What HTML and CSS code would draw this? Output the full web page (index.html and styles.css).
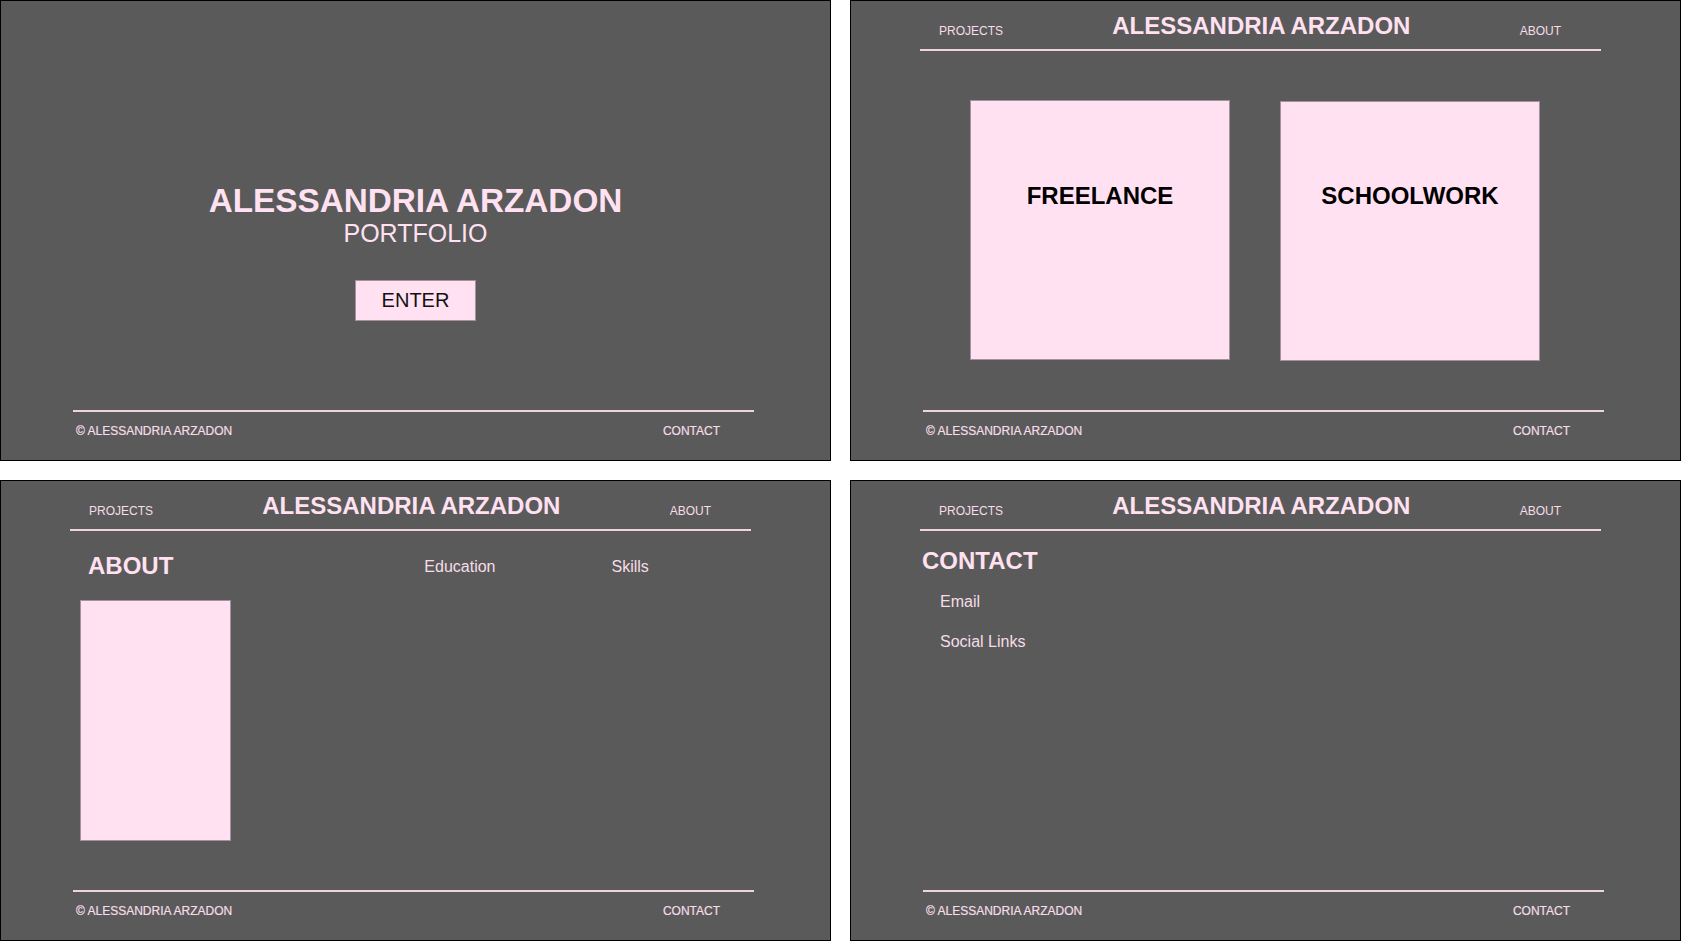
FILE: index.html
```html
<!DOCTYPE html>
<html lang="en">
<head>
<meta charset="utf-8">
<title>Alessandria Arzadon Portfolio</title>
<link rel="stylesheet" href="styles.css">
</head>
<body>
<div class="board">

  <section class="panel">
    <main class="landing">
      <h1 class="landing-title">ALESSANDRIA ARZADON</h1>
      <p class="landing-sub">PORTFOLIO</p>
      <a class="enter-btn" href="#">ENTER</a>
    </main>
    <footer class="foot">
      <span>© ALESSANDRIA ARZADON</span>
      <span>CONTACT</span>
    </footer>
  </section>

  <section class="panel">
    <header class="head">
      <span class="nav">PROJECTS</span>
      <span class="brand">ALESSANDRIA ARZADON</span>
      <span class="nav">ABOUT</span>
    </header>
    <main class="projects">
      <div class="card"><h2 class="card-title">FREELANCE</h2></div>
      <div class="card card-b"><h2 class="card-title">SCHOOLWORK</h2></div>
    </main>
    <footer class="foot">
      <span>© ALESSANDRIA ARZADON</span>
      <span>CONTACT</span>
    </footer>
  </section>

  <section class="panel">
    <header class="head">
      <span class="nav">PROJECTS</span>
      <span class="brand">ALESSANDRIA ARZADON</span>
      <span class="nav">ABOUT</span>
    </header>
    <main class="about">
      <div class="about-row">
        <h2 class="section-title">ABOUT</h2>
        <span class="about-link edu">Education</span>
        <span class="about-link skills">Skills</span>
      </div>
      <div class="photo"></div>
    </main>
    <footer class="foot">
      <span>© ALESSANDRIA ARZADON</span>
      <span>CONTACT</span>
    </footer>
  </section>

  <section class="panel">
    <header class="head">
      <span class="nav">PROJECTS</span>
      <span class="brand">ALESSANDRIA ARZADON</span>
      <span class="nav">ABOUT</span>
    </header>
    <main class="contact">
      <h2 class="section-title">CONTACT</h2>
      <ul class="contact-list">
        <li>Email</li>
        <li>Social Links</li>
      </ul>
    </main>
    <footer class="foot">
      <span>© ALESSANDRIA ARZADON</span>
      <span>CONTACT</span>
    </footer>
  </section>

</div>
</body>
</html>
```
FILE: styles.css
```css
* { box-sizing: border-box; }

html, body {
  margin: 0;
  padding: 0;
  background: #ffffff;
}

body {
  font-family: "Liberation Sans", Arial, sans-serif;
  width: 1681px;
  height: 942px;
  overflow: hidden;
}

.board {
  display: grid;
  grid-template-columns: 831px 831px;
  grid-template-rows: 461px 461px;
  column-gap: 19px;
  row-gap: 19px;
}

.panel {
  border: 1px solid #000;
  background: #5a5a5a;
  display: flex;
  flex-direction: column;
  color: #ffe1f1;
  overflow: hidden;
}

/* ---------- header ---------- */
.head {
  margin: 11px 0 0 69px;
  width: 681px;
  padding: 0 40px 9px 19px;
  border-bottom: 2px solid #f0d3e2;
  display: flex;
  justify-content: space-between;
  align-items: baseline;
  flex: none;
}

.nav {
  font-size: 12px;
  line-height: 14px;
  color: #f6dde9;
  position: relative;
  top: 1px;
}

.brand {
  font-size: 24px;
  font-weight: bold;
  line-height: 28px;
  color: #ffe1f1;
}

/* ---------- footer ---------- */
.foot {
  margin: auto 0 0 72px;
  width: 681px;
  height: 50px;
  padding: 12px 34px 0 3px;
  border-top: 2px solid #f0d3e2;
  display: flex;
  justify-content: space-between;
  font-size: 12px;
  line-height: 14px;
  color: #f6dde9;
  flex: none;
  -webkit-text-stroke: 0.2px #f6dde9;
}

/* ---------- landing ---------- */
.landing {
  padding-top: 182px;
  display: flex;
  flex-direction: column;
  align-items: center;
}

.landing-title {
  margin: 0;
  font-size: 33.3px;
  line-height: 36px;
  font-weight: bold;
  color: #ffe1f1;
}

.landing-sub {
  margin: 0;
  font-size: 25px;
  line-height: 28px;
  color: #ffe1f1;
}

.enter-btn {
  margin-top: 33px;
  width: 121px;
  height: 41px;
  border: 1px solid #a3919c;
  background: #ffe1f1;
  color: #111;
  font-size: 20px;
  line-height: 23px;
  padding-top: 8px;
  text-align: center;
  text-decoration: none;
}

/* ---------- projects ---------- */
.projects {
  display: flex;
  gap: 50px;
  padding: 49px 0 0 119px;
  align-items: flex-start;
}

.card {
  width: 260px;
  height: 260px;
  background: #ffe1f1;
  border: 1px solid #a3919c;
  padding-top: 81px;
  text-align: center;
}

.card-b {
  margin-top: 1px;
  padding-top: 80px;
}

.card-title {
  margin: 0;
  font-size: 24px;
  line-height: 28px;
  font-weight: bold;
  color: #000;
}

/* ---------- about ---------- */
.about {
  padding: 21px 0 0 79px;
}

.about-row {
  display: flex;
  align-items: center;
  padding-left: 8px;
}

.section-title {
  margin: 0;
  font-size: 24px;
  line-height: 28px;
  font-weight: bold;
  color: #ffe1f1;
}

.about-link {
  font-size: 16px;
  line-height: 18px;
  color: #f6dde9;
  position: relative;
  top: 1px;
}

.edu { margin-left: 251px; }
.skills { margin-left: 116px; }

.photo {
  margin-top: 20px;
  width: 151px;
  height: 241px;
  background: #ffe1f1;
  border: 1px solid #a3919c;
}

/* ---------- contact ---------- */
.contact {
  padding: 16px 0 0 71px;
}

.contact-list {
  list-style: none;
  margin: 18px 0 0 0;
  padding: 0 0 0 18px;
  display: flex;
  flex-direction: column;
  gap: 22px;
  font-size: 16px;
  line-height: 18px;
  color: #f6dde9;
}
```
